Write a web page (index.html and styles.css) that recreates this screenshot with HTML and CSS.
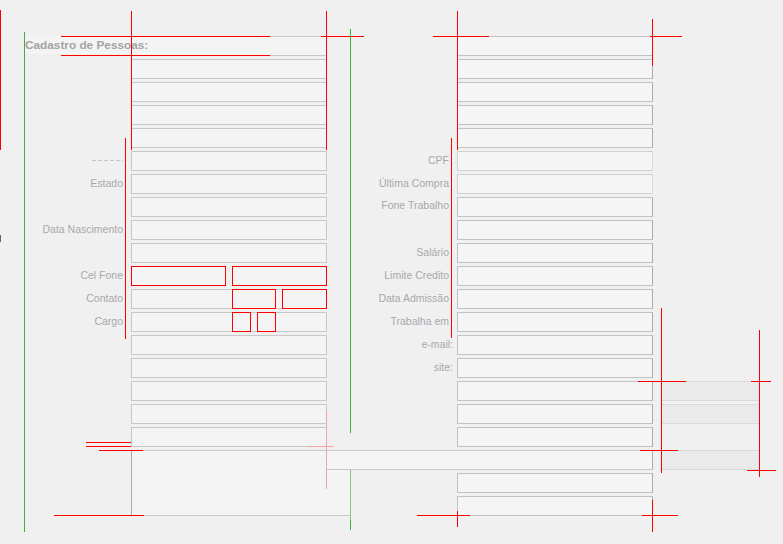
FILE: index.html
```html
<!DOCTYPE html>
<html>
<head>
    <title>Cadastro de Pessoas</title>
    <link rel="stylesheet" href="styles.css">
</head>
<body>
    <div class="canvas">
        <div class="form">
            <!-- left column -->
            <div class="col col-left">
                <div class="field"></div>
                <div class="field"></div>
                <div class="field"></div>
                <div class="field"></div>
                <div class="field"></div>
                <div class="lbl"><span class="cut"></span></div>
                <div class="field"></div>
                <div class="lbl">Estado</div>
                <div class="field"></div>
                <div class="field"></div>
                <div class="lbl">Data Nascimento</div>
                <div class="field"></div>
                <div class="field"></div>
                <div class="lbl">Cel Fone</div>
                <div class="pair">
                    <div class="sel wide-sel"></div>
                    <div class="sel wide-sel"></div>
                </div>
                <div class="lbl">Contato</div>
                <div class="field split">
                    <div class="sel mid-a"></div>
                    <div class="sel mid-b"></div>
                </div>
                <div class="lbl">Cargo</div>
                <div class="field split">
                    <div class="sel tiny"></div>
                    <div class="sel tiny"></div>
                </div>
                <div class="field"></div>
                <div class="field"></div>
                <div class="field"></div>
                <div class="field"></div>
                <div class="field"></div>
                <div class="memo"></div>
            </div>

            <!-- right column -->
            <div class="col col-right">
                <div class="field"></div>
                <div class="field"></div>
                <div class="field"></div>
                <div class="field"></div>
                <div class="field"></div>
                <div class="lbl">CPF</div>
                <div class="field light"></div>
                <div class="lbl">Última Compra</div>
                <div class="field light"></div>
                <div class="lbl up">Fone Trabalho</div>
                <div class="field"></div>
                <div class="field"></div>
                <div class="lbl">Salário</div>
                <div class="field"></div>
                <div class="lbl">Limite Credito</div>
                <div class="field"></div>
                <div class="lbl">Data Admissão</div>
                <div class="field"></div>
                <div class="lbl">Trabalha em</div>
                <div class="field"></div>
                <div class="lbl tight">e-mail:</div>
                <div class="field"></div>
                <div class="lbl tight">site:</div>
                <div class="field"></div>
                <div class="field"></div>
                <div class="panel"></div>
                <div class="field"></div>
                <div class="panel"></div>
                <div class="field"></div>
                <div class="field wide"></div>
                <div class="panel"></div>
                <div class="field"></div>
                <div class="field"></div>
            </div>
        </div>

        <div class="title">Cadastro de Pessoas:</div>

        <!-- designer guide lines -->
        <svg class="guides" width="783" height="544" viewBox="0 0 783 544">
            <g stroke="#ff0000" stroke-width="1">
                <line x1="0.5" y1="10" x2="0.5" y2="150"/>
                <line x1="131.5" y1="11" x2="131.5" y2="150"/>
                <line x1="326.5" y1="11" x2="326.5" y2="150"/>
                <line x1="125.5" y1="138" x2="125.5" y2="339"/>
                <line x1="61" y1="36.5" x2="270" y2="36.5"/>
                <line x1="61" y1="55.5" x2="270" y2="55.5"/>
                <line x1="321" y1="36.5" x2="364" y2="36.5"/>
                <line x1="457.5" y1="11" x2="457.5" y2="150"/>
                <line x1="451.5" y1="138" x2="451.5" y2="338"/>
                <line x1="433" y1="36.5" x2="489" y2="36.5"/>
                <line x1="652.5" y1="19" x2="652.5" y2="66"/>
                <line x1="650" y1="36.5" x2="682" y2="36.5"/>
                <line x1="661.5" y1="308" x2="661.5" y2="473"/>
                <line x1="638" y1="381.5" x2="686" y2="381.5"/>
                <line x1="640" y1="450.5" x2="678" y2="450.5"/>
                <line x1="759.5" y1="330" x2="759.5" y2="477"/>
                <line x1="751" y1="381.5" x2="771" y2="381.5"/>
                <line x1="747" y1="470.5" x2="776" y2="470.5"/>
                <line x1="457.5" y1="511" x2="457.5" y2="527"/>
                <line x1="417" y1="515.5" x2="470" y2="515.5"/>
                <line x1="652.5" y1="500" x2="652.5" y2="532"/>
                <line x1="642" y1="515.5" x2="678" y2="515.5"/>
                <line x1="86" y1="442.5" x2="131" y2="442.5"/>
                <line x1="86" y1="446.5" x2="131" y2="446.5"/>
                <line x1="99" y1="450.5" x2="143" y2="450.5"/>
                <line x1="54" y1="515.5" x2="144" y2="515.5"/>
            </g>
            <g stroke="#f6a3a3" stroke-width="1">
                <line x1="326.5" y1="411" x2="326.5" y2="489"/>
                <line x1="307" y1="446.5" x2="334" y2="446.5"/>
            </g>
            <g stroke="#3cb43c" stroke-width="1">
                <line x1="24.5" y1="32" x2="24.5" y2="532"/>
                <line x1="350.5" y1="29" x2="350.5" y2="433"/>
                <line x1="350.5" y1="520" x2="350.5" y2="530"/>
            </g>
            <line x1="350.5" y1="470" x2="350.5" y2="520" stroke="#7ccf7c" stroke-width="1"/>
            <line x1="0.5" y1="235" x2="0.5" y2="242" stroke="#666" stroke-width="1"/>
        </svg>
    </div>
</body>
</html>
```

FILE: styles.css
```css
body {
    margin: 0;
    padding: 0;
    background: #f0f0f0;
    font-family: "Liberation Sans", Arial, sans-serif;
}
.canvas {
    position: relative;
    width: 783px;
    height: 544px;
    overflow: hidden;
}
.form {
    display: flex;
    padding-top: 36px;
}
.col {
    display: grid;
    grid-auto-rows: 20px;
    row-gap: 3px;
    align-content: start;
}
.col-left {
    grid-template-columns: 131px 196px;
    width: 327px;
}
.col-right {
    grid-template-columns: 130px 196px 106px;
}
.lbl {
    grid-column: 1;
    text-align: right;
    padding-right: 8px;
    font-size: 10.5px;
    line-height: 19px;
    color: #a8a8ac;
    white-space: nowrap;
}
.lbl.tight {
    padding-right: 4px;
}
.lbl.up {
    line-height: 16px;
}
.cut {
    display: inline-block;
    width: 31px;
    height: 1px;
    margin-top: 9px;
    vertical-align: top;
    background: repeating-linear-gradient(90deg, #c4c4c4 0 4px, transparent 4px 6px);
}
.field {
    grid-column: 2;
    box-sizing: border-box;
    height: 20px;
    background: #f4f4f4;
    border: 1px solid #c8c8c8;
}
.col-right .field {
    border-color: #c2c2c2;
    border-right-color: #ababab;
    background: #f5f5f5;
}
.col-right .field.light {
    border-color: #d0d0d0;
    border-right-color: #dcdcdc;
}
.field.split {
    display: flex;
    gap: 6px;
    border: none;
    box-shadow: inset 0 0 0 1px #c8c8c8;
    padding-left: 101px;
}
.pair {
    grid-column: 2;
    display: flex;
    gap: 6px;
}
.sel {
    box-sizing: border-box;
    height: 20px;
    border: 1px solid #ff0000;
}
.wide-sel {
    width: 95px;
    background: #f4f4f4;
}
.mid-a {
    width: 44px;
}
.mid-b {
    width: 45px;
}
.tiny {
    width: 19px;
}
.memo {
    grid-column: 2;
    grid-row: span 3;
    box-sizing: border-box;
    width: 219px;
    background: #f4f4f4;
    border: 1px solid #c8c8c8;
    border-left-color: #a8a8a8;
    border-right: none;
}
.col-right .field.wide {
    width: 326px;
    margin-left: -130px;
    border-left: none;
    border-top-color: #c8c8c8;
    border-bottom-color: #c8c8c8;
}
.panel {
    grid-column: 3;
    box-sizing: border-box;
    width: 98px;
    margin-left: 8px;
    background: #eaeaea;
    border-top: 1px solid #dadada;
    border-bottom: 1px solid #dadada;
}
.title {
    position: absolute;
    left: 24px;
    top: 36px;
    width: 126px;
    height: 18px;
    background: #f4f4f4;
    padding-left: 1px;
    font-size: 11.8px;
    font-weight: bold;
    line-height: 19px;
    color: #a3a3a3;
    white-space: nowrap;
}
.guides {
    position: absolute;
    left: 0;
    top: 0;
    shape-rendering: crispEdges;
}
```
